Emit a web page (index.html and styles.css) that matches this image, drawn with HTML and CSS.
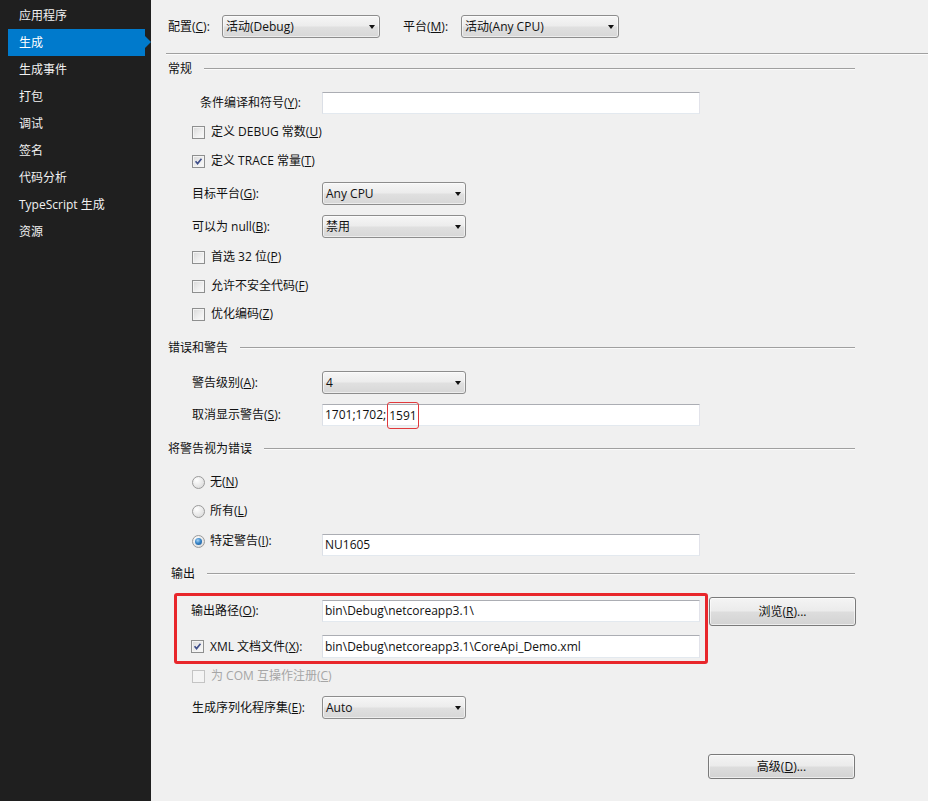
FILE: index.html
```html
<!DOCTYPE html>
<html lang="zh-CN">
<head>
<meta charset="utf-8">
<title>生成</title>
<link rel="stylesheet" href="styles.css">
</head>
<body>
<div class="app">
  <nav class="sidebar">
    <div class="nav-item">应用程序</div>
    <div class="nav-item active">生成</div>
    <div class="nav-item">生成事件</div>
    <div class="nav-item">打包</div>
    <div class="nav-item">调试</div>
    <div class="nav-item">签名</div>
    <div class="nav-item">代码分析</div>
    <div class="nav-item">TypeScript 生成</div>
    <div class="nav-item">资源</div>
  </nav>

  <main class="content">
    <div class="toprow">
      <span class="lbl-cfg">配置(<u>C</u>):</span>
      <div class="combo combo-wide"><span>活动(Debug)</span><i class="arrow"></i></div>
      <span class="lbl-plat">平台(<u>M</u>):</span>
      <div class="combo combo-wide"><span>活动(Any CPU)</span><i class="arrow"></i></div>
    </div>
    <div class="rule"></div>

    <div class="page">
      <div class="head mt6"><span>常规</span></div>

      <div class="row text mt15">
        <span class="lbl lbl-indent">条件编译和符号(<u>Y</u>):</span>
        <div class="textbox"></div>
      </div>
      <div class="row mt8"><span class="cb"></span><span>定义 DEBUG 常数(<u>U</u>)</span></div>
      <div class="row mt9"><span class="cb checked"><svg viewBox="0 0 13 13"><path d="M3 6.2 L5.4 9 L10 3.2" /></svg></span><span>定义 TRACE 常量(<u>T</u>)</span></div>

      <div class="row field mt11">
        <span class="lbl">目标平台(<u>G</u>):</span>
        <div class="combo combo-sm"><span>Any CPU</span><i class="arrow"></i></div>
      </div>
      <div class="row field mt10">
        <span class="lbl">可以为 null(<u>B</u>):</span>
        <div class="combo combo-sm"><span>禁用</span><i class="arrow"></i></div>
      </div>
      <div class="row mt9"><span class="cb"></span><span>首选 32 位(<u>P</u>)</span></div>
      <div class="row mt9"><span class="cb"></span><span>允许不安全代码(<u>F</u>)</span></div>
      <div class="row mt8"><span class="cb"></span><span>优化编码(<u>Z</u>)</span></div>

      <div class="head mt16"><span>错误和警告</span></div>
      <div class="row field mt15">
        <span class="lbl">警告级别(<u>A</u>):</span>
        <div class="combo combo-sm"><span>4</span><i class="arrow"></i></div>
      </div>
      <div class="row text mt10">
        <span class="lbl">取消显示警告(<u>S</u>):</span>
        <div class="textbox">1701;1702;<span class="mark">1591</span></div>
      </div>

      <div class="head mt15"><span>将警告视为错误</span></div>
      <div class="row mt15"><span class="rb"></span><span>无(<u>N</u>)</span></div>
      <div class="row mt9"><span class="rb"></span><span>所有(<u>L</u>)</span></div>
      <div class="row text mt13">
        <span class="lbl opt-raised"><span class="rb on"></span><span>特定警告(<u>I</u>):</span></span>
        <div class="textbox">NU1605</div>
      </div>

      <div class="head head-out mt10"><span>输出</span></div>
      <div class="out-row mt11">
        <div class="redbox">
          <div class="row text in-first">
            <span class="lbl lbl-out">输出路径(<u>O</u>):</span>
            <div class="textbox">bin\Debug\netcoreapp3.1\</div>
          </div>
          <div class="row field in-second">
            <span class="lbl lbl-out"><span class="cb checked"><svg viewBox="0 0 13 13"><path d="M3 6.2 L5.4 9 L10 3.2" /></svg></span><span>XML 文档文件(<u>X</u>):</span></span>
            <div class="textbox">bin\Debug\netcoreapp3.1\CoreApi_Demo.xml</div>
          </div>
        </div>
        <button class="btn btn-browse">浏览(<u>R</u>)...</button>
      </div>

      <div class="row disabled mt2"><span class="cb cb-off"></span><span>为 COM 互操作注册(<u>C</u>)</span></div>
      <div class="row field mt10">
        <span class="lbl">生成序列化程序集(<u>E</u>):</span>
        <div class="combo combo-sm"><span>Auto</span><i class="arrow"></i></div>
      </div>

      <div class="row end mt35">
        <button class="btn">高级(<u>D</u>)...</button>
      </div>
    </div>
  </main>
</div>
</body>
</html>
```

FILE: styles.css
```css
html, body {
  margin: 0;
  padding: 0;
  height: 100%;
}

body {
  font-family: "Open Sans", "Noto Sans CJK SC", sans-serif;
  font-size: 12px;
  line-height: 16px;
  color: #111111;
  background: #f0f0f0;
}

u {
  text-decoration: underline;
  text-underline-offset: 1px;
}

.app {
  display: flex;
  min-height: 100vh;
}

/* ---------- sidebar ---------- */
.sidebar {
  width: 151px;
  flex: none;
  background: #1f1f1f;
  padding-top: 2px;
  box-sizing: border-box;
}

.nav-item {
  position: relative;
  height: 27px;
  line-height: 27px;
  padding-left: 19px;
  color: #f1f1f1;
  white-space: nowrap;
}

.nav-item.active {
  margin-left: 8px;
  width: 137px;
  padding-left: 11px;
  box-sizing: border-box;
  background: #007acc;
  color: #ffffff;
}

.nav-item.active::after {
  content: "";
  position: absolute;
  right: -6px;
  top: 7px;
  border-left: 6px solid #007acc;
  border-top: 6px solid transparent;
  border-bottom: 6px solid transparent;
}

/* ---------- content ---------- */
.content {
  flex: 1;
  padding: 15px 0 0 15px;
  box-sizing: border-box;
}

.toprow {
  display: flex;
  align-items: center;
  height: 23px;
  padding-left: 2px;
}

.lbl-cfg {
  width: 54px;
  flex: none;
}

.lbl-plat {
  width: 58px;
  flex: none;
  margin-left: 23px;
}

.rule {
  margin-top: 15px;
  height: 0;
  border-top: 1px solid #a0a0a0;
  border-bottom: 1px solid #fbfbfb;
}

.page {
  margin-left: 2px;
  width: 687px;
}

.head {
  display: flex;
  align-items: center;
  height: 16px;
}

.head::after {
  content: "";
  flex: 1;
  height: 0;
  margin-left: 12px;
  border-top: 1px solid #a0a0a0;
  border-bottom: 1px solid #fbfbfb;
}

.head-out {
  padding-left: 3px;
}

.row {
  display: flex;
  align-items: center;
  height: 20px;
  padding-left: 24px;
  white-space: nowrap;
}

.row.field {
  height: 23px;
}

.row.text {
  height: 22px;
}

.row.end {
  justify-content: flex-end;
  height: 25px;
}

.row.disabled {
  color: #a6a6a6;
}

.lbl {
  width: 130px;
  flex: none;
  display: flex;
  align-items: center;
}

.lbl-indent {
  padding-left: 8px;
  box-sizing: border-box;
}

.opt-raised {
  margin-bottom: 8px;
}

/* spacing helpers */
.mt2 { margin-top: 2px; }
.mt6 { margin-top: 6px; }
.mt8 { margin-top: 8px; }
.mt9 { margin-top: 9px; }
.mt10 { margin-top: 10px; }
.mt11 { margin-top: 11px; }
.mt13 { margin-top: 13px; }
.mt15 { margin-top: 15px; }
.mt16 { margin-top: 16px; }
.mt35 { margin-top: 35px; }

/* ---------- controls ---------- */
.combo {
  box-sizing: border-box;
  height: 23px;
  display: flex;
  align-items: center;
  padding-left: 3px;
  border: 1px solid #8d8d8d;
  border-radius: 3px;
  background: linear-gradient(#f6f6f6 0%, #ececec 48%, #e0e0e0 52%, #d7d7d7 100%);
  box-shadow: inset 0 0 0 1px rgba(255, 255, 255, 0.55);
}

.combo-wide {
  width: 158px;
  flex: none;
}

.combo-sm {
  width: 144px;
  flex: none;
}

.arrow {
  margin-left: auto;
  margin-right: 4px;
  width: 0;
  height: 0;
  border-left: 3.5px solid transparent;
  border-right: 3.5px solid transparent;
  border-top: 4px solid #111;
}

.textbox {
  box-sizing: border-box;
  width: 378px;
  height: 100%;
  flex: none;
  display: flex;
  align-items: center;
  padding-left: 2px;
  background: #ffffff;
  border: 1px solid;
  border-color: #abadb3 #e2e3ea #e3e9ef #dbdfe6;
}

.mark {
  outline: 1px solid #e0393c;
  outline-offset: 0;
  border-radius: 2px;
  padding: 5px 1px 4px 1px;
  margin-left: 2px;
}

.cb {
  box-sizing: border-box;
  width: 13px;
  height: 13px;
  flex: none;
  margin-right: 6px;
  border: 1px solid #8e8f8f;
  background: linear-gradient(135deg, #d8d8d8 0%, #eeeeee 55%, #fbfbfb 100%);
  box-shadow: inset 0 0 0 1px #f4f4f4;
  display: flex;
}

.cb svg {
  width: 11px;
  height: 11px;
}

.cb svg path {
  fill: none;
  stroke: #3f4f8a;
  stroke-width: 1.9;
}

.cb-off {
  border-color: #c4c4c4;
  background: #f4f4f4;
}

.rb {
  box-sizing: border-box;
  width: 13px;
  height: 13px;
  flex: none;
  margin-right: 5px;
  border-radius: 50%;
  border: 1px solid #9a9a9a;
  background: radial-gradient(circle at 35% 30%, #ffffff 0%, #e8e8e8 55%, #d4d4d4 100%);
  display: flex;
  align-items: center;
  justify-content: center;
}

.rb.on::before {
  content: "";
  width: 7px;
  height: 7px;
  border-radius: 50%;
  background: radial-gradient(circle at 40% 35%, #a9d4f5 0%, #3a86c8 45%, #164f8c 100%);
}

/* ---------- output block ---------- */
.out-row {
  display: flex;
  align-items: flex-start;
  margin-left: 6px;
}

.redbox {
  box-sizing: border-box;
  width: 534px;
  height: 71px;
  border: 3px solid #e8262b;
  border-radius: 3px;
  padding: 4px 5px 0 14px;
}

.redbox .row {
  padding-left: 0;
}

.lbl-out {
  width: 131px;
}

.in-second {
  margin-top: 13px;
}

.btn {
  box-sizing: border-box;
  width: 147px;
  height: 25px;
  flex: none;
  font: inherit;
  color: #111111;
  border: 1px solid #7a7a7a;
  border-radius: 3px;
  background: linear-gradient(#f4f4f4 0%, #ebebeb 48%, #dddddd 52%, #d3d3d3 100%);
  box-shadow: inset 0 0 0 1px rgba(255, 255, 255, 0.6);
  padding: 0;
}

.btn-browse {
  height: 29px;
  margin-top: 4px;
  margin-left: 1px;
}
```
